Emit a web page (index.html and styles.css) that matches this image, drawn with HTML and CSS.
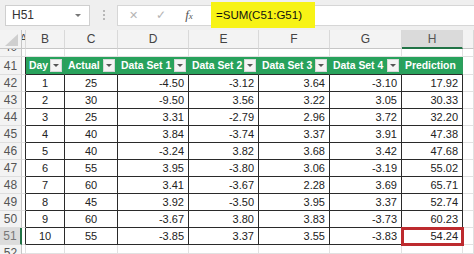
FILE: index.html
```html
<!DOCTYPE html>
<html>
<head>
<meta charset="utf-8">
<link rel="stylesheet" href="styles.css">
</head>
<body>
<div class="app">
  <div class="fbar">
    <div class="namebox"><span>H51</span><span class="nb-arrow"></span></div>
    <div class="grip"><i></i><i></i><i></i></div>
    <div class="fbox">
      <span class="ico ico-x">✕</span>
      <span class="ico ico-ok">✓</span>
      <span class="ico ico-fx"><i>f</i><span class="sx">x</span></span>
      <span class="formula">=SUM(C51:G51)</span>
    </div>
  </div>
  <div class="sheet">
    <!-- column headers -->
    <div class="ch corner"><span class="tri"></span></div>
    <div class="ch">A</div>
    <div class="ch">B</div>
    <div class="ch">C</div>
    <div class="ch">D</div>
    <div class="ch">E</div>
    <div class="ch">F</div>
    <div class="ch">G</div>
    <div class="ch sel">H</div>
    <div class="ch"></div>

    <!-- row 40 (partial) -->
    <div class="rh part-top"><span>40</span></div>
    <div class="g"></div><div class="g"></div><div class="g"></div><div class="g"></div><div class="g"></div><div class="g"></div><div class="g"></div><div class="g"></div><div class="g"></div>

    <!-- row 41 header -->
    <div class="rh">41</div>
    <div class="g edge"></div>
    <div class="th"><span>Day</span><span class="fb"></span></div>
    <div class="th"><span>Actual</span><span class="fb"></span></div>
    <div class="th"><span>Data Set 1</span><span class="fb"></span></div>
    <div class="th"><span>Data Set 2</span><span class="fb"></span></div>
    <div class="th"><span>Data Set 3</span><span class="fb"></span></div>
    <div class="th"><span>Data Set 4</span><span class="fb"></span></div>
    <div class="th"><span>Prediction</span></div>
    <div class="g"></div>

    <div class="rh">42</div><div class="g edge"></div>
    <div class="td c">1</div><div class="td c">25</div><div class="td">-4.50</div><div class="td">-3.12</div><div class="td">3.64</div><div class="td">-3.10</div><div class="td">17.92</div><div class="g"></div>

    <div class="rh">43</div><div class="g edge"></div>
    <div class="td c">2</div><div class="td c">30</div><div class="td">-9.50</div><div class="td">3.56</div><div class="td">3.22</div><div class="td">3.05</div><div class="td">30.33</div><div class="g"></div>

    <div class="rh">44</div><div class="g edge"></div>
    <div class="td c">3</div><div class="td c">25</div><div class="td">3.31</div><div class="td">-2.79</div><div class="td">2.96</div><div class="td">3.72</div><div class="td">32.20</div><div class="g"></div>

    <div class="rh">45</div><div class="g edge"></div>
    <div class="td c">4</div><div class="td c">40</div><div class="td">3.84</div><div class="td">-3.74</div><div class="td">3.37</div><div class="td">3.91</div><div class="td">47.38</div><div class="g"></div>

    <div class="rh">46</div><div class="g edge"></div>
    <div class="td c">5</div><div class="td c">40</div><div class="td">-3.24</div><div class="td">3.82</div><div class="td">3.68</div><div class="td">3.42</div><div class="td">47.68</div><div class="g"></div>

    <div class="rh">47</div><div class="g edge"></div>
    <div class="td c">6</div><div class="td c">55</div><div class="td">3.95</div><div class="td">-3.80</div><div class="td">3.06</div><div class="td">-3.19</div><div class="td">55.02</div><div class="g"></div>

    <div class="rh">48</div><div class="g edge"></div>
    <div class="td c">7</div><div class="td c">60</div><div class="td">3.41</div><div class="td">-3.67</div><div class="td">2.28</div><div class="td">3.69</div><div class="td">65.71</div><div class="g"></div>

    <div class="rh">49</div><div class="g edge"></div>
    <div class="td c">8</div><div class="td c">45</div><div class="td">3.92</div><div class="td">-3.50</div><div class="td">3.95</div><div class="td">3.37</div><div class="td">52.74</div><div class="g"></div>

    <div class="rh">50</div><div class="g edge"></div>
    <div class="td c">9</div><div class="td c">60</div><div class="td">-3.67</div><div class="td">3.80</div><div class="td">3.83</div><div class="td">-3.73</div><div class="td">60.23</div><div class="g"></div>

    <div class="rh sel">51</div><div class="g edge"></div>
    <div class="td c">10</div><div class="td c">55</div><div class="td">-3.85</div><div class="td">3.37</div><div class="td">3.55</div><div class="td">-3.83</div><div class="td active">54.24</div><div class="g"></div>

    <!-- row 52 (partial) -->
    <div class="rh part-bot"><span>52</span></div>
    <div class="g"></div><div class="g"></div><div class="g"></div><div class="g"></div><div class="g"></div><div class="g"></div><div class="g"></div><div class="g"></div><div class="g"></div>
  </div>
</div>
</body>
</html>
```
FILE: styles.css
```css
* { box-sizing: border-box; }
html, body { margin: 0; padding: 0; }
body {
  width: 474px;
  height: 254px;
  overflow: hidden;
  background: #ffffff;
  font-family: "Liberation Sans", Arial, sans-serif;
}
.app {
  display: flex;
  flex-direction: column;
  height: 254px;
}

/* formula bar */
.fbar {
  height: 30px;
  flex: none;
  background: #efefef;
  display: flex;
  align-items: center;
  padding-left: 5px;
}
.namebox {
  width: 85px;
  height: 21px;
  background: #fff;
  border: 1px solid #cfcfcf;
  display: flex;
  align-items: center;
  justify-content: space-between;
  padding: 0 6px 0 6px;
  font-size: 12px;
  color: #333;
}
.nb-arrow {
  width: 0;
  height: 0;
  border-left: 3px solid transparent;
  border-right: 3px solid transparent;
  border-top: 3px solid #777;
  margin-right: 2px;
}
.grip {
  width: 27px;
  display: flex;
  flex-direction: column;
  align-items: center;
  gap: 2px;
}
.grip i {
  display: block;
  width: 2px;
  height: 2px;
  background: #b8b8b8;
}
.fbox {
  flex: 1;
  height: 21px;
  background: #fff;
  border: 1px solid #d6d6d6;
  border-right: none;
  display: flex;
  align-items: center;
}
.ico {
  color: #b5b5b5;
  text-align: center;
  font-size: 12px;
}
.ico-x { width: 28px; margin-left: 1px; font-size: 11px; }
.ico-ok { width: 28px; font-size: 12px; }
.ico-fx {
  width: 28px;
  color: #555;
  font-family: "Liberation Serif", "Times New Roman", serif;
  font-size: 13px;
}
.ico-fx .sx { font-size: 9px; font-style: italic; }
.formula {
  margin-left: 8px;
  height: 26px;
  width: 104px;
  background: #f7f315;
  display: flex;
  align-items: center;
  padding-left: 5px;
  font-size: 11.5px;
  color: #111;
}

/* sheet grid */
.sheet {
  flex: 1;
  display: grid;
  grid-template-columns: 22px 4px 39px 53px 71px 70px 71px 72px 61px 1fr;
  grid-template-rows: 19px 8px 18px repeat(10, 17px) 1fr;
  font-size: 11px;
  overflow: hidden;
}
.ch {
  background: #f3f3f3;
  border-right: 1px solid #d9d9d9;
  border-bottom: 1px solid #c6c6c6;
  color: #444;
  font-size: 12px;
  display: flex;
  align-items: center;
  justify-content: center;
  overflow: hidden;
}
.ch.corner {
  position: relative;
  border-right-color: #c6c6c6;
}
.tri {
  position: absolute;
  right: 3px;
  bottom: 2px;
  width: 0;
  height: 0;
  border-left: 13px solid transparent;
  border-bottom: 12px solid #cfcfcf;
}
.ch.sel {
  background: #dadada;
  border-bottom: 2px solid #217346;
  color: #555;
}
.rh {
  background: #f3f3f3;
  border-right: 1px solid #c6c6c6;
  border-bottom: 1px solid #dedede;
  color: #555;
  font-size: 12px;
  display: flex;
  align-items: center;
  justify-content: center;
  overflow: hidden;
}
.rh.sel {
  background: #dcdcdc;
  border-right: 2px solid #217346;
  color: #777;
}
.rh.part-top { align-items: flex-end; }
.rh.part-top span, .rh.part-bot span { line-height: 17px; flex: none; }
.rh.part-bot { align-items: flex-start; border-bottom: none; }
.g {
  background: #fff;
  border-right: 1px solid #e1e1e1;
  border-bottom: 1px solid #e1e1e1;
}
.g.edge { border-right-color: #2a2a2a; }

.th {
  background: #28a25c;
  color: #fff;
  font-weight: bold;
  font-size: 10.4px;
  border-right: 1px solid #2f9a5c;
  border-bottom: 1px solid #2a2a2a;
  display: flex;
  align-items: center;
  justify-content: space-between;
  gap: 2px;
  padding: 0 2px 0 3px;
  white-space: nowrap;
  overflow: hidden;
}
.fb {
  flex: none;
  width: 12px;
  height: 13px;
  background: #f4f4f4;
  border: 1px solid #d8d8d8;
  display: flex;
  align-items: center;
  justify-content: center;
}
.fb::after {
  content: "";
  width: 0;
  height: 0;
  border-left: 3px solid transparent;
  border-right: 3px solid transparent;
  border-top: 3px solid #555;
}
.td {
  background: #fff;
  border-right: 1px solid #2a2a2a;
  border-bottom: 1px solid #2a2a2a;
  color: #222;
  display: flex;
  align-items: center;
  justify-content: flex-end;
  padding-right: 4px;
}
.td.c { justify-content: center; padding-right: 0; }
.td.active {
  position: relative;
  z-index: 1;
  outline: 3px solid #bd2a2e;
  outline-offset: -2px;
}
```
